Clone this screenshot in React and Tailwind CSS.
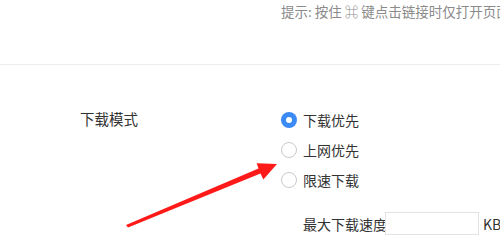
export default function App() {
  const options = [
    { label: "下载优先", checked: true },
    { label: "上网优先", checked: false },
    { label: "限速下载", checked: false },
  ];

  return (
    <div
      className="relative h-[242px] w-[500px] overflow-hidden bg-white text-[#333]"
      style={{ fontFamily: '"Noto Sans CJK SC", "Liberation Sans", sans-serif' }}
    >
      {/* hint */}
      <div className="h-[65px] border-b border-[#ececec] pl-[281px] pt-[1px]">
        <p className="whitespace-nowrap text-[13.5px] leading-[20px] text-[#8a8a8a]">
          提示: 按住 ⌘ 键点击链接时仅打开页面
        </p>
      </div>

      <div className="flex pt-[40px]">
        <div className="w-[281px] shrink-0 pl-[80px] text-[14.5px] leading-[30px] -mt-[1px]">
          下载模式
        </div>

        <div className="flex shrink-0 flex-col">
          {options.map((opt) => (
            <label key={opt.label} className="flex h-[30px] items-center gap-[6px]">
              {opt.checked ? (
                <span className="flex h-4 w-4 items-center justify-center rounded-full bg-[#3b8af6]">
                  <span className="h-[6px] w-[6px] rounded-full bg-white" />
                </span>
              ) : (
                <span className="h-4 w-4 rounded-full border border-[#c9c9c9] bg-white" />
              )}
              <span className="text-[14px] leading-[20px]">{opt.label}</span>
            </label>
          ))}

          <div className="mt-[17px] flex items-center pl-[22px]">
            <span className="w-[82px] whitespace-nowrap text-[14px] leading-[20px]">最大下载速度</span>
            <input className="h-[23px] w-[94px] border border-[#e3e3e3] bg-white outline-none" />
            <span className="ml-[4px] text-[14px] leading-[20px]">KB/s</span>
          </div>
        </div>
      </div>

      {/* annotation arrow */}
      <svg
        className="absolute left-0 top-0"
        width="500"
        height="242"
        viewBox="0 0 500 242"
      >
        <polygon
          points="126,225 258.5,168.5 256.7,163.3 277,164 263.3,179.5 260.5,173.5 128,227.5"
          fill="#ff1a1a"
        />
      </svg>
    </div>
  );
}
